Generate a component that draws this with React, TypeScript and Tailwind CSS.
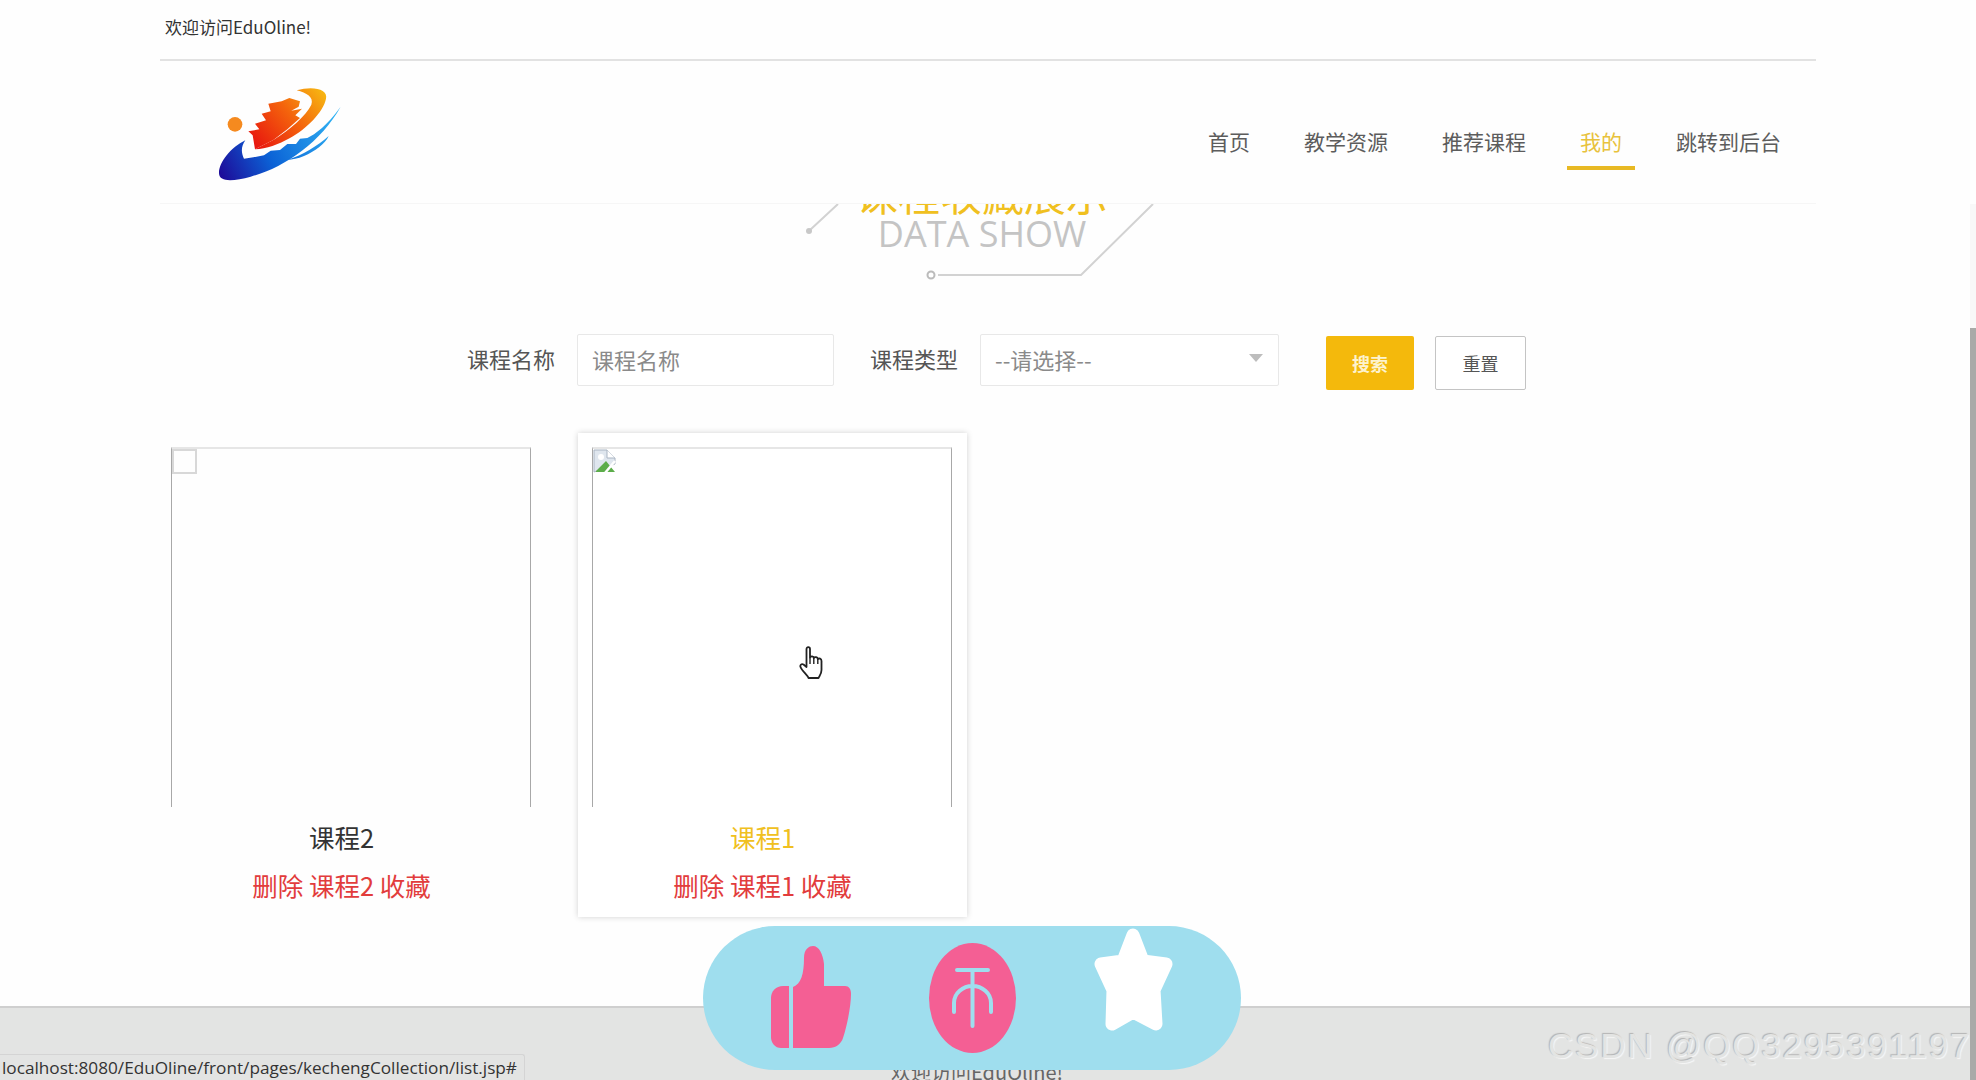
const font = "font-['Noto_Sans_CJK_SC','Noto_Sans',sans-serif]";

const navItems = [
  { label: "首页" },
  { label: "教学资源" },
  { label: "推荐课程" },
  { label: "我的", active: true },
  { label: "跳转到后台" },
];

function Logo() {
  return (
    <svg viewBox="0 0 480 360" className="w-[160px] h-[120px] shrink-0">
      <defs>
        <linearGradient id="logoBlue" gradientUnits="userSpaceOnUse" x1="60" y1="300" x2="400" y2="130">
          <stop offset="0" stopColor="#1d0d9a" />
          <stop offset="0.4" stopColor="#0b62d6" />
          <stop offset="1" stopColor="#2fb0f2" />
        </linearGradient>
        <linearGradient id="logoFire" gradientUnits="userSpaceOnUse" x1="170" y1="230" x2="370" y2="60">
          <stop offset="0" stopColor="#e8150f" />
          <stop offset="0.55" stopColor="#f4640c" />
          <stop offset="1" stopColor="#f7b512" />
        </linearGradient>
      </defs>
      <circle cx="105" cy="157" r="22" fill="#f58a1f" />
      <path
        d="M136 205C92 226 56 272 57 304C58 332 102 328 152 314C250 288 362 212 422 104C382 160 346 186 322 198L300 200L288 216L262 216L240 234L212 236L192 250L160 256L132 260C122 240 124 222 136 205Z"
        fill="url(#logoBlue)"
      />
      <path
        d="M262 264C310 248 352 222 386 192C376 216 344 238 312 252C294 260 276 262 262 264Z"
        fill="url(#logoBlue)"
      />
      <path
        d="M290 55C340 40 385 52 378 80C370 120 320 170 270 198C235 218 200 230 165 232L220 204C270 172 318 132 334 98C342 76 320 62 290 55Z"
        fill="url(#logoFire)"
      />
      <path
        d="M165 232L158 190L145 178L178 172L165 155L198 145L185 125L212 118L205 95L245 88L268 78L300 88L296 104L274 116L306 110L286 130L300 138L262 172L220 204Z"
        fill="url(#logoFire)"
      />
    </svg>
  );
}

function ThumbIcon() {
  return (
    <svg viewBox="0 0 80 102" className="w-[80px] h-[102px]">
      <path
        d="M18 102H10C4 102 0 97 0 91V52C0 45 5 40 12 40H18Z"
        fill="#f45f94"
      />
      <path
        d="M22 102V41C30 38 33 28 33 12C33 3 38 0 42 0C48 0 52 8 53 18L53 40H74C78 40 80 43 80 48C80 60 76 80 72 92C70 98 65 102 58 102Z"
        fill="#f45f94"
      />
    </svg>
  );
}

function OvalIcon() {
  return (
    <svg viewBox="0 0 87 110" className="w-[87px] h-[110px]">
      <ellipse cx="43.5" cy="55" rx="43.5" ry="55" fill="#f45f94" />
      <path
        d="M28 27H59M43.5 27V83M25 69V60C25 50 34 43 43.5 43C53 43 62 50 62 60V69"
        fill="none"
        stroke="#9fdeee"
        strokeWidth="4"
        strokeLinecap="round"
      />
    </svg>
  );
}

function StarIcon() {
  return (
    <svg viewBox="0 0 80 105" className="w-[80px] h-[105px]">
      <path
        d="M39 7L49 33L72 36L60 62L62 96L39 84L18 96L19 62L7 36L29 33Z"
        fill="#fff"
        stroke="#fff"
        strokeWidth="13"
        strokeLinejoin="round"
      />
    </svg>
  );
}

function BrokenImage() {
  return (
    <svg viewBox="0 0 24 24" className="w-[24px] h-[24px]">
      <path d="M1 1H14L22 9V15L1 23Z" fill="#dfe6ee" stroke="#a9b4c2" strokeWidth="1" />
      <path d="M14 1V9H22" fill="#fff" stroke="#a9b4c2" strokeWidth="1" />
      <circle cx="8" cy="8" r="3" fill="#fff" />
      <path d="M3 22L13 12L17 17L22 23H3Z" fill="#5cad4a" />
      <path d="M12 24L22 12" stroke="#fff" strokeWidth="2.5" />
    </svg>
  );
}

function HandCursor() {
  return (
    <svg
      viewBox="0 0 24 34"
      className="absolute left-[799px] top-[646px] w-[24px] h-[34px]"
    >
      <path
        d="M7.5 3C7.5 .5 11 .5 11 3V11.5C12 10 14.5 10 14.8 12C16 10.5 18.5 11 18.8 13C20 12 22.5 12.5 22.5 15V24C22.5 28 20.5 30 19.5 32H9.5C8.5 29 3 25 1.5 21C.8 19 2.5 17.5 4.5 18.5L7.5 21Z"
        fill="#fff"
        stroke="#222"
        strokeWidth="1.8"
        strokeLinejoin="round"
      />
      <path d="M11 11.5V18M14.8 12V18M18.8 13V18" stroke="#222" strokeWidth="1.4" />
    </svg>
  );
}

function CourseCard({
  name,
  highlighted,
}: {
  name: string;
  highlighted?: boolean;
}) {
  return (
    <div
      className={`w-[389px] h-[484px] p-[14px] ${
        highlighted ? "bg-white shadow-[0_0_6px_rgba(0,0,0,0.18)]" : ""
      }`}
    >
      <div className="w-[360px] h-[360px] border-x border-x-[#a8a8a8] border-t-2 border-t-[#e6e6e6]">
        {highlighted ? (
          <BrokenImage />
        ) : (
          <div className="w-[25px] h-[25px] border-2 border-[#d8d8d8]" />
        )}
      </div>
      <div className="pr-[20px] text-center text-[25.5px] leading-[36px]">
        <p
          className={`mt-[12px] ${highlighted ? "text-[#f0c020]" : "text-[#333]"}`}
        >
          {name}
        </p>
        <p className="mt-[12px] text-[#e23c3c]">删除 {name} 收藏</p>
      </div>
    </div>
  );
}

export default function App() {
  return (
    <div
      className={`${font} relative flex flex-col h-[1080px] overflow-hidden bg-[#fefefe]`}
    >
      <div className="flex-1 w-[1656px] mx-auto">
        <div className="h-[61px] flex items-center px-[5px] pb-[6px] border-b-2 border-[#e2e2e2] text-[17px] text-[#333]">
          欢迎访问EduOline!
        </div>

        <div className="h-[143px] flex justify-between border-b border-[#f6f6f6]">
          <div className="ml-[40px] mt-[11px]">
            <Logo />
          </div>
          <nav className="flex items-end gap-[28px] pr-[22px] pb-[33px]">
            {navItems.map((item) => (
              <a
                key={item.label}
                href="#"
                className={`h-[51px] px-[13px] text-[21px] leading-[44px] border-b-4 ${
                  item.active
                    ? "text-[#e8c23c] border-[#e8b923]"
                    : "text-[#5c5c5c] border-transparent"
                }`}
              >
                {item.label}
              </a>
            ))}
          </nav>
        </div>

        <div className="relative h-[130px] overflow-hidden">
          <svg
            viewBox="0 0 1656 130"
            className="absolute inset-0 w-[1656px] h-[130px]"
          >
            <path
              d="M993 0L921 71H778M678 0L650 26"
              fill="none"
              stroke="#d2d2d2"
              strokeWidth="2"
            />
            <circle cx="771" cy="71" r="3.5" fill="#fff" stroke="#bbb" strokeWidth="2" />
            <circle cx="649" cy="27" r="3" fill="#c8c8c8" />
          </svg>
          <div className="relative flex flex-col items-center pr-[12px] -mt-[32px]">
            <p className="text-[42px] leading-[42px] text-[#f0c020]">
              课程收藏展示
            </p>
            <p className="text-[36px] leading-[40px] text-[#c4c4c4] font-['Open_Sans',sans-serif]">
              DATA SHOW
            </p>
          </div>
        </div>

        <div className="flex items-start ml-[307px] text-[22px]">
          <label className="w-[88px] mr-[22px] leading-[48px] text-[#555]">
            课程名称
          </label>
          <input
            placeholder="课程名称"
            className="w-[257px] h-[52px] px-[14px] pb-[2px] bg-white border border-[#e8e8e8] rounded-[2px] outline-none placeholder:text-[#8a8a8a]"
          />
          <label className="w-[88px] ml-[36px] mr-[22px] leading-[48px] text-[#555]">
            课程类型
          </label>
          <div className="w-[299px] h-[52px] flex items-center justify-between pl-[14px] pr-[15px] pb-[2px] bg-white border border-[#e8e8e8] rounded-[2px] text-[#8a8a8a]">
            <span>--请选择--</span>
            <span className="w-0 h-0 mb-[2px] border-x-[7px] border-t-[8px] border-x-transparent border-t-[#bdbdbd]" />
          </div>
          <button
            type="button"
            className="w-[88px] h-[54px] ml-[47px] mt-[2px] bg-[#f4b90c] rounded-[2px] text-[18px] font-bold text-[#fdf3cf]"
          >
            搜索
          </button>
          <button
            type="button"
            className="w-[91px] h-[54px] ml-[21px] mt-[2px] bg-white border border-[#c4c4c4] rounded-[2px] text-[18px] text-[#555]"
          >
            重置
          </button>
        </div>

        <div className="flex gap-[32px] -ml-[3px] mt-[43px]">
          <CourseCard name="课程2" />
          <CourseCard name="课程1" highlighted />
        </div>
      </div>

      <footer className="h-[74px] flex justify-center pt-[50px] pr-[22px] bg-[#e3e4e3] border-t-2 border-[#cfcfcf] text-[20px] leading-[28px] text-[#666]">
        欢迎访问EduOline!
      </footer>

      {/* overlays */}
      <div className="absolute left-0 bottom-0 w-[525px] h-[26px] pl-[2px] bg-[#e3e4e3] border-t border-r border-[#d4d4d4] rounded-tr-[3px] font-['Open_Sans',sans-serif] text-[17.2px] leading-[26px] text-[#333] whitespace-nowrap">
        localhost:8080/EduOline/front/pages/kechengCollection/list.jsp#
      </div>

      <div className="absolute left-[703px] top-[926px] w-[538px] h-[144px] rounded-[72px] bg-[#9fdeee]">
        <div className="absolute left-[68px] top-[20px]">
          <ThumbIcon />
        </div>
        <div className="absolute left-[226px] top-[17px]">
          <OvalIcon />
        </div>
        <div className="absolute left-[391px] top-[2px]">
          <StarIcon />
        </div>
      </div>

      <div className="absolute left-[1548px] top-[1024px] font-['Liberation_Sans',sans-serif] text-[35px] leading-[44px] tracking-[1.8px] text-[#e3e4e3] whitespace-nowrap [text-shadow:-1px_-1px_1px_#b4b4b4,1px_1px_1px_#f7f7f7]">
        CSDN @QQ3295391197
      </div>

      <div className="absolute right-0 top-[204px] bottom-0 w-[6px] bg-[#f8f8f8]">
        <div className="mt-[124px] h-[752px] bg-[#a9aaa8]" />
      </div>

      <HandCursor />
    </div>
  );
}
